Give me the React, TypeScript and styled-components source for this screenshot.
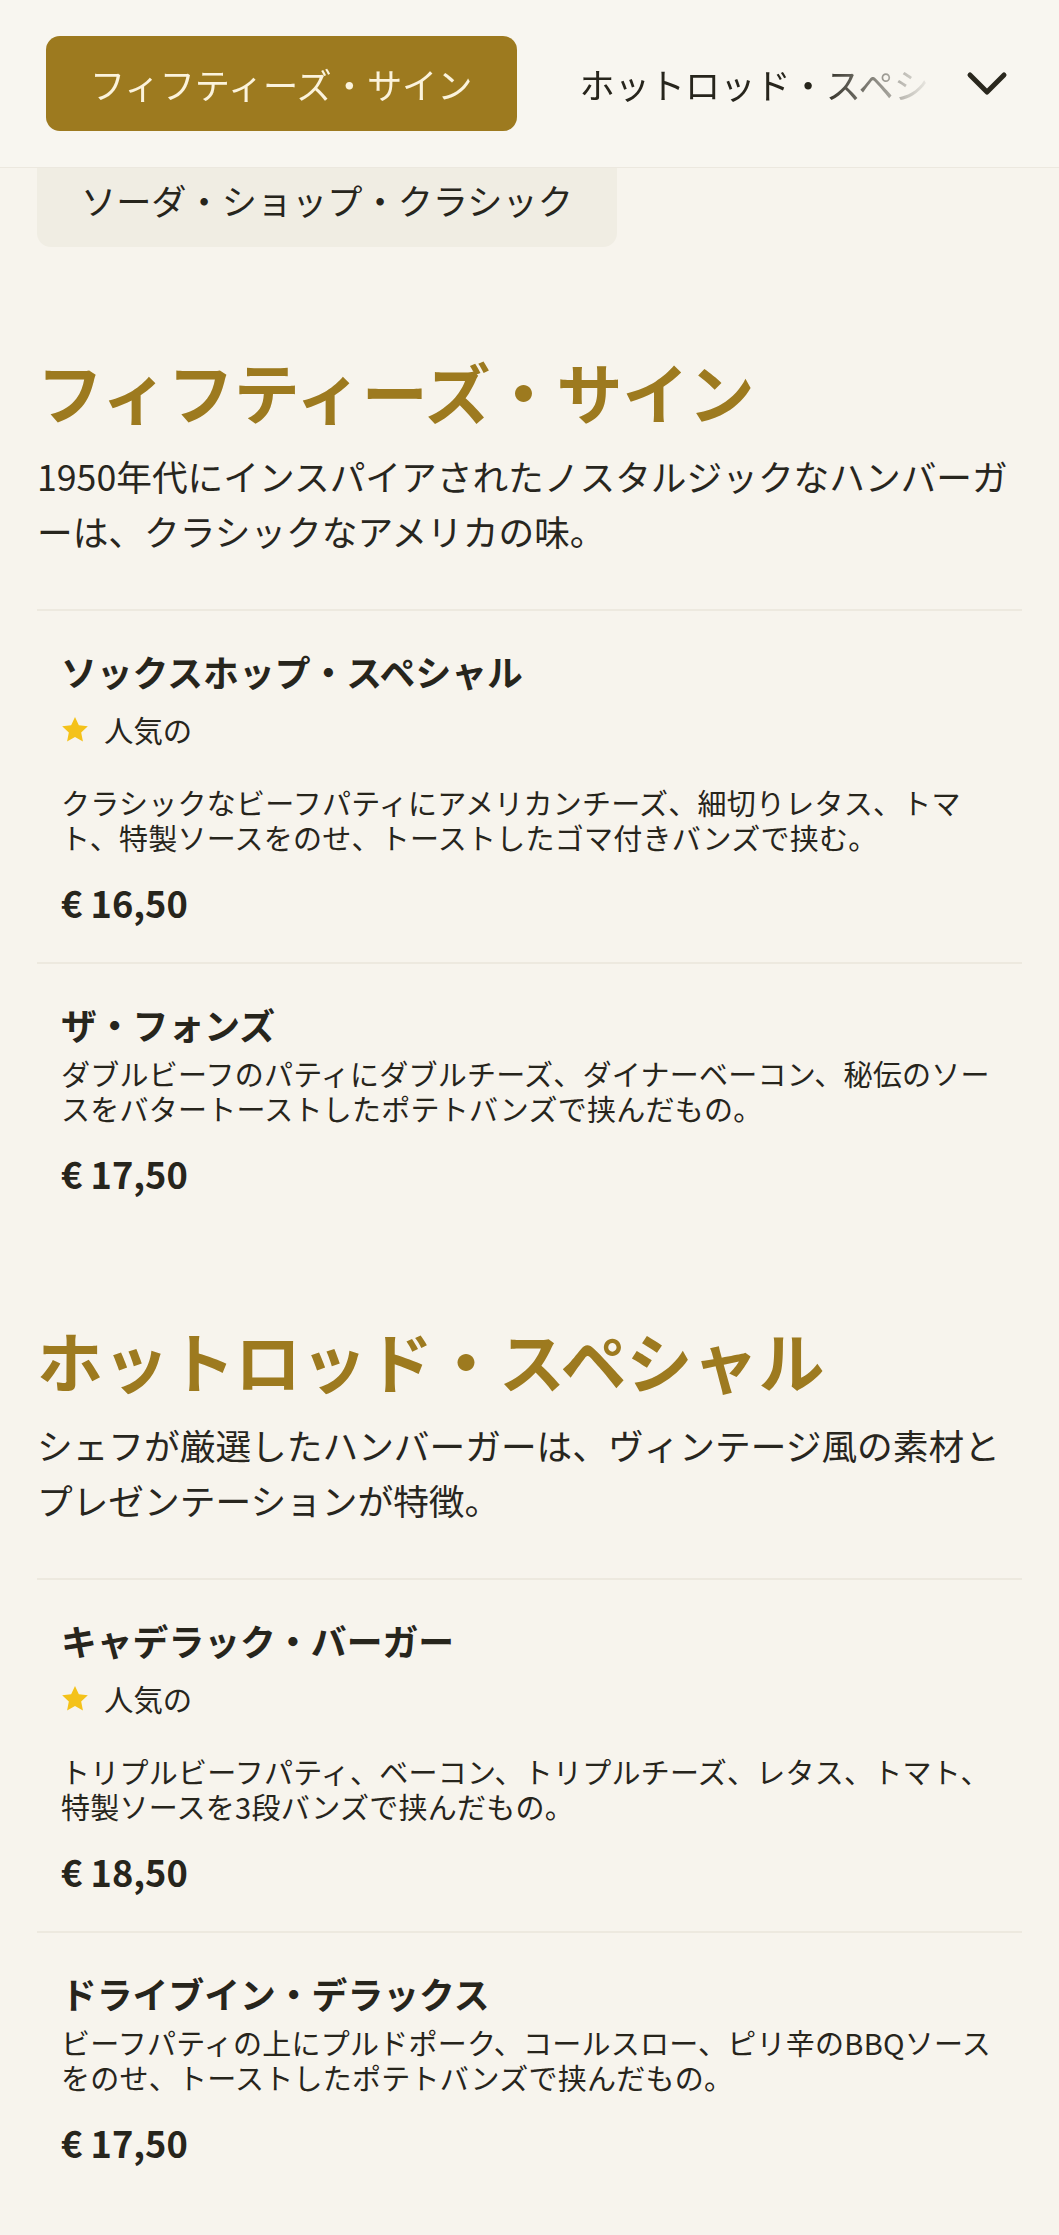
import React from "react";
import styled, { createGlobalStyle } from "styled-components";

const GlobalStyle = createGlobalStyle`
  html, body {
    margin: 0;
    padding: 0;
    background: #F7F4ED;
  }
  body {
    font-family: "Noto Sans CJK JP", "Noto Sans", sans-serif;
    color: #27251c;
  }
  * { box-sizing: border-box; }
`;

const Header = styled.header`
  position: relative;
  z-index: 2;
  height: 168px;
  display: flex;
  align-items: center;
  padding: 0 30px 0 46px;
  background: #F8F6F0;
  border-bottom: 1px solid #ECE8DF;
`;

const TabScroller = styled.nav`
  flex: 1;
  min-width: 0;
  display: flex;
  align-items: center;
  gap: 19px;
  overflow: hidden;
  -webkit-mask-image: linear-gradient(to right, #000 calc(100% - 125px), transparent calc(100% - 10px));
  mask-image: linear-gradient(to right, #000 calc(100% - 125px), transparent calc(100% - 10px));
`;

const Tab = styled.div<{ $active?: boolean; $muted?: boolean }>`
  flex-shrink: 0;
  height: 95px;
  display: flex;
  align-items: center;
  padding: 0 44px;
  border-radius: 14px;
  font-size: 35.2px;
  white-space: nowrap;
  background: ${(p) => (p.$active ? "#9D7A1F" : p.$muted ? "#F0EDE3" : "transparent")};
  color: ${(p) => (p.$active ? "#FBF3DC" : "#27251c")};
`;

const MenuButton = styled.button`
  flex-shrink: 0;
  width: 84px;
  height: 84px;
  border: none;
  background: transparent;
  display: flex;
  align-items: center;
  justify-content: center;
  padding: 0;
`;

const SubRow = styled.div`
  position: relative;
  z-index: 1;
  display: flex;
  padding-left: 37px;
  margin-top: -16px;
`;

const Main = styled.main`
  padding: 15px 37px 25px;
`;

const Section = styled.section`
  padding-top: 86px;

  & + & {
    padding-top: 84px;
  }
`;

const SectionTitle = styled.h2`
  margin: 0;
  font-size: 66px;
  line-height: 84px;
  font-weight: 700;
  color: #9D7A1F;
  white-space: nowrap;
`;

const SectionDesc = styled.p`
  margin: 16px 0 0;
  font-size: 35.7px;
  line-height: 55px;
  color: #28261e;
`;

const ItemList = styled.div`
  margin-top: 51px;
`;

const Item = styled.article`
  border-top: 2px solid #EDE9DF;
  padding: 36px 24px;
`;

const ItemName = styled.h3`
  margin: 0;
  font-size: 35.8px;
  line-height: 48px;
  font-weight: 700;
  color: #27251c;
`;

const Popular = styled.div`
  display: flex;
  align-items: center;
  gap: 15px;
  margin: 16px 0 38px;
  font-size: 29.4px;
  line-height: 36px;
  color: #27251c;
`;

const ItemDesc = styled.p`
  margin: 8px 0 0;
  font-size: 29px;
  letter-spacing: 0.25px;
  line-height: 35px;
  color: #27251c;
`;

const Price = styled.div`
  margin-top: 23px;
  font-size: 36.2px;
  line-height: 48px;
  font-weight: 700;
  color: #27251c;
`;

const Star = () => (
  <svg width="28" height="27" viewBox="0 0 24 23" aria-hidden>
    <path
      d="M12 0.8l3.3 7.1 7.7 0.9-5.7 5.3 1.5 7.7L12 17.9l-6.8 3.9 1.5-7.7L1 8.8l7.7-0.9z"
      fill="#F4C21A"
    />
  </svg>
);

const Chevron = () => (
  <svg width="42" height="26" viewBox="0 0 42 26" aria-hidden>
    <polyline
      points="4,4 21,21 38,4"
      fill="none"
      stroke="#2A281E"
      strokeWidth="5"
      strokeLinecap="round"
      strokeLinejoin="round"
    />
  </svg>
);

type MenuItem = { name: string; popular?: boolean; desc: string; price: string };
type MenuSection = { title: string; desc: string; items: MenuItem[] };

const sections: MenuSection[] = [
  {
    title: "フィフティーズ・サイン",
    desc: "1950年代にインスパイアされたノスタルジックなハンバーガーは、クラシックなアメリカの味。",
    items: [
      {
        name: "ソックスホップ・スペシャル",
        popular: true,
        desc: "クラシックなビーフパティにアメリカンチーズ、細切りレタス、トマト、特製ソースをのせ、トーストしたゴマ付きバンズで挟む。",
        price: "€ 16,50",
      },
      {
        name: "ザ・フォンズ",
        desc: "ダブルビーフのパティにダブルチーズ、ダイナーベーコン、秘伝のソースをバタートーストしたポテトバンズで挟んだもの。",
        price: "€ 17,50",
      },
    ],
  },
  {
    title: "ホットロッド・スペシャル",
    desc: "シェフが厳選したハンバーガーは、ヴィンテージ風の素材とプレゼンテーションが特徴。",
    items: [
      {
        name: "キャデラック・バーガー",
        popular: true,
        desc: "トリプルビーフパティ、ベーコン、トリプルチーズ、レタス、トマト、特製ソースを3段バンズで挟んだもの。",
        price: "€ 18,50",
      },
      {
        name: "ドライブイン・デラックス",
        desc: "ビーフパティの上にプルドポーク、コールスロー、ピリ辛のBBQソースをのせ、トーストしたポテトバンズで挟んだもの。",
        price: "€ 17,50",
      },
    ],
  },
];

export default function App() {
  return (
    <>
      <GlobalStyle />
      <Header>
        <TabScroller>
          <Tab $active>フィフティーズ・サイン</Tab>
          <Tab>ホットロッド・スペシャル</Tab>
        </TabScroller>
        <MenuButton aria-label="menu">
          <Chevron />
        </MenuButton>
      </Header>
      <SubRow>
        <Tab $muted>ソーダ・ショップ・クラシック</Tab>
      </SubRow>
      <Main>
        {sections.map((s) => (
          <Section key={s.title}>
            <SectionTitle>{s.title}</SectionTitle>
            <SectionDesc>{s.desc}</SectionDesc>
            <ItemList>
              {s.items.map((it) => (
                <Item key={it.name}>
                  <ItemName>{it.name}</ItemName>
                  {it.popular && (
                    <Popular>
                      <Star />
                      <span>人気の</span>
                    </Popular>
                  )}
                  <ItemDesc>{it.desc}</ItemDesc>
                  <Price>{it.price}</Price>
                </Item>
              ))}
            </ItemList>
          </Section>
        ))}
      </Main>
    </>
  );
}
